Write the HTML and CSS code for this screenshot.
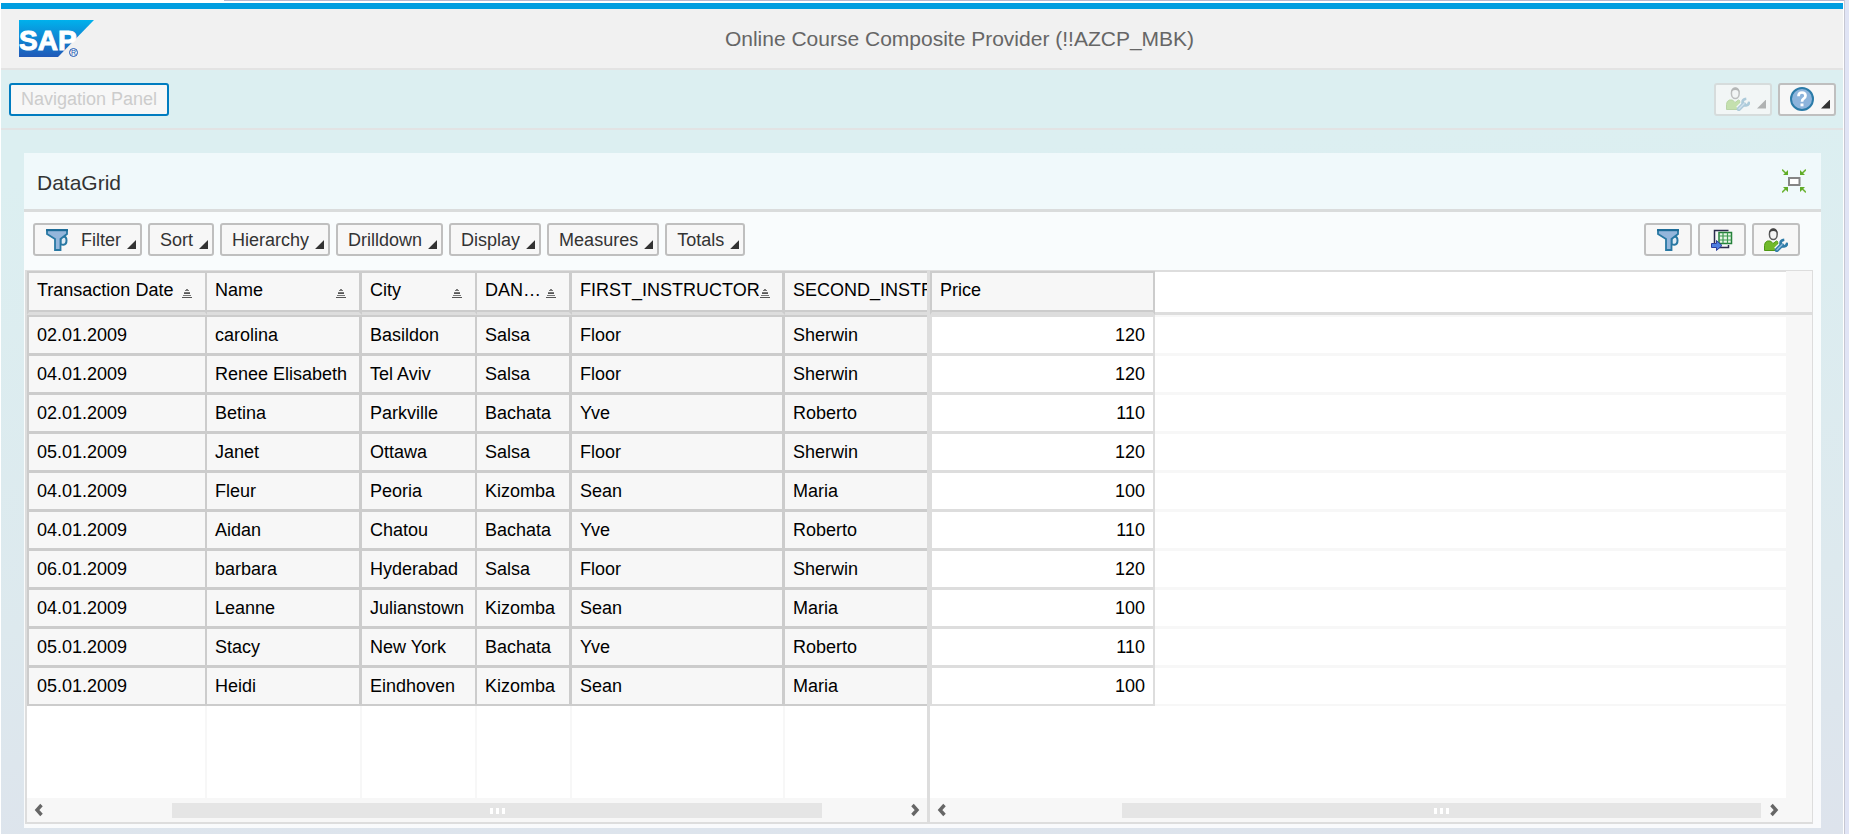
FILE: index.html
```html
<!DOCTYPE html>
<html lang="en">
<head>
<meta charset="utf-8">
<title>Online Course Composite Provider</title>
<link rel="stylesheet" href="styles.css">
</head>
<body>
<svg class="defs" aria-hidden="true">
  <defs>
    <linearGradient id="sapBlue" x1="0" y1="0" x2="0" y2="1">
      <stop offset="0" stop-color="#00b1ec"/><stop offset="1" stop-color="#2059b8"/>
    </linearGradient>
    <symbol id="funnel" viewBox="0 0 24 24">
      <path d="M15.500 16v-4q0-3.500 3-3.500t3 4-3 4.200q-2 0-3-.7" fill="#dfeaf4" stroke="#2878a3" stroke-width="2"/>
      <path d="M2 2h20v4l-6.500 5v11h-5.500V11L2 6z" fill="#94b6db" stroke="#2878a3" stroke-width="1.800"/>
      <path d="M1 2.200h22" stroke="#1c6b96" stroke-width="2"/>
    </symbol>
    <symbol id="person" viewBox="0 0 24 24">
      <path d="M.5 22.500v-5q0-3.500 3-4.500h3l2.500 2.500 3.500-2.500 1.500 1v8.500z" fill="#71b92a" stroke="#4e9713"/>
      <ellipse cx="9.300" cy="6.300" rx="3.900" ry="5.300" fill="#f4f4f4" stroke="#5c5c5c" stroke-width="1.500"/>
      <path d="M5 6q0-5.500 4.300-5.500T13.600 6q-1-3-4.300-3T5 6z" fill="#444"/>
      <path d="M12.500 22l6-6" stroke="#f7f7f7" stroke-width="6.500"/>
      <path d="M12.800 22l5-5" stroke="#2f7ca8" stroke-width="4.200" stroke-linecap="round"/>
      <path d="M20.500 11.500q-3.500.5-4.500 3.500" fill="none" stroke="#f7f7f7" stroke-width="5"/>
      <path d="M20.300 11.800q-4 .5-3.800 3.700 1 3 3.500 3 3-.5 3.300-3.800" fill="none" stroke="#2f7ca8" stroke-width="2.600"/>
      <path d="M13 21.800l5-5" stroke="#8fb8dc" stroke-width="1.500" stroke-linecap="round"/>
    </symbol>
    <symbol id="sortAsc" viewBox="0 0 10 10">
      <path d="M4 0h2v1h1v1H3V1h1zM2 4h6v1H2zM2 3h6v1H2zM1 6h8v1H1zM0 8h10v1H0z" fill="#777"/>
      <path d="M2 4h6v1H2zM0 8h10v1H0z" fill="#555"/>
    </symbol>
    <symbol id="chevLeft" viewBox="0 0 10 14">
      <path d="M7.500 2L3 7l4.500 5" fill="none" stroke="#666" stroke-width="3.400"/>
    </symbol>
    <symbol id="chevRight" viewBox="0 0 10 14">
      <path d="M2.500 2L7 7l-4.500 5" fill="none" stroke="#666" stroke-width="3.400"/>
    </symbol>
  </defs>
</svg>

<div class="app">
  <header class="shell">
    <svg class="logo" viewBox="0 0 75 38" role="img" aria-label="SAP">
      <path d="M0 0h75L39 37H0z" fill="url(#sapBlue)"/>
      <text class="logo-text" x="0" y="30">SAP</text>
      <circle cx="54.500" cy="32.500" r="4" fill="none" stroke="#2059b8"/>
      <text class="logo-mark" x="52" y="35">R</text>
    </svg>
    <h1 class="title">Online Course Composite Provider (!!AZCP_MBK)</h1>
  </header>

  <div class="topbar">
    <button class="btn nav-btn" type="button" disabled>Navigation Panel</button>
    <div class="topbar-actions">
      <button class="btn icon-menu faded" type="button" disabled aria-label="Personalize"><svg class="icon"><use href="#person"/></svg><span class="corner"></span></button>
      <button class="btn icon-menu" type="button" aria-label="Help">
        <svg class="icon" viewBox="0 0 24 24"><circle cx="12" cy="12" r="11" fill="#8db4dc" stroke="#2b7ba8" stroke-width="2"/><path d="M8.500 9.200q0-3.700 3.500-3.700t3.500 3.200q0 2-2 3-1.500.8-1.500 3" fill="none" stroke="#fff" stroke-width="2.700"/><path d="M10.500 16.500h3v2.800h-3z" fill="#fff"/></svg><span class="corner"></span></button>
    </div>
  </div>

  <main class="panel">
    <div class="panel-head">
      <h2 class="panel-title">DataGrid</h2>
      <button class="plain" type="button" aria-label="Restore">
        <svg class="icon" viewBox="0 0 24 24"><rect x="7" y="9" width="10.500" height="7" fill="#fff" stroke="#858585" stroke-width="2"/><path d="M0 .7l5 4.600M24 .7l-5 4.600M0 23.300l5-4.600M24 23.300l-5-4.600" stroke="#72b83b" stroke-width="1.700"/><path d="M6 1v5H1zM18 1v5h5zM6 23v-5H1zM18 23v-5h5z" fill="#60ac28"/></svg>
      </button>
    </div>

    <div class="toolbar">
      <button class="btn menu" type="button"><svg class="icon filter-icon"><use href="#funnel"/></svg>Filter<span class="corner"></span></button>
      <button class="btn menu" type="button">Sort<span class="corner"></span></button>
      <button class="btn menu" type="button">Hierarchy<span class="corner"></span></button>
      <button class="btn menu" type="button">Drilldown<span class="corner"></span></button>
      <button class="btn menu" type="button">Display<span class="corner"></span></button>
      <button class="btn menu" type="button">Measures<span class="corner"></span></button>
      <button class="btn menu" type="button">Totals<span class="corner"></span></button>
      <div class="toolbar-end">
        <button class="btn tool" type="button" aria-label="Filter settings"><svg class="icon"><use href="#funnel"/></svg></button>
        <button class="btn tool" type="button" aria-label="Export">
          <svg class="icon" viewBox="0 0 24 24"><path d="M4.500 15V2.500h14M9 19.500h9.500V17" fill="none" stroke="#2b2b4c" stroke-width="1.500"/><rect x="9" y="4.500" width="12.500" height="11" fill="#e9f7e9" stroke="#24803a" stroke-width="1.500"/><path d="M9 8h12.500M9 12h12.500M13 4.500v11M17.500 4.500v11" stroke="#3c9a50" stroke-width="1.200"/><path d="M1.500 15.500h5v-3l5.500 5-5.500 5v-3h-5z" fill="#4d7ee0" stroke="#2b3c9c"/></svg>
        </button>
        <button class="btn tool" type="button" aria-label="Personalize grid"><svg class="icon"><use href="#person"/></svg></button>
      </div>
    </div>

    <div class="grid">
      <section class="pane pane-dims">
        <table class="tbl dims">
          <colgroup><col class="c-date"><col class="c-name"><col class="c-city"><col class="c-dance"><col class="c-first"><col class="c-second"></colgroup>
          <thead>
            <tr>
              <th scope="col"><div class="th">Transaction Date<svg class="sort"><use href="#sortAsc"/></svg></div></th>
              <th scope="col"><div class="th">Name<svg class="sort"><use href="#sortAsc"/></svg></div></th>
              <th scope="col"><div class="th">City<svg class="sort"><use href="#sortAsc"/></svg></div></th>
              <th scope="col"><div class="th">DAN…<svg class="sort"><use href="#sortAsc"/></svg></div></th>
              <th scope="col"><div class="th">FIRST_INSTRUCTOR<svg class="sort"><use href="#sortAsc"/></svg></div></th>
              <th scope="col"><div class="th th-cut">SECOND_INSTRUCTOR</div></th>
            </tr>
          </thead>
          <tbody>
            <tr><td>02.01.2009</td><td>carolina</td><td>Basildon</td><td>Salsa</td><td>Floor</td><td>Sherwin</td></tr>
            <tr><td>04.01.2009</td><td>Renee Elisabeth</td><td>Tel Aviv</td><td>Salsa</td><td>Floor</td><td>Sherwin</td></tr>
            <tr><td>02.01.2009</td><td>Betina</td><td>Parkville</td><td>Bachata</td><td>Yve</td><td>Roberto</td></tr>
            <tr><td>05.01.2009</td><td>Janet</td><td>Ottawa</td><td>Salsa</td><td>Floor</td><td>Sherwin</td></tr>
            <tr><td>04.01.2009</td><td>Fleur</td><td>Peoria</td><td>Kizomba</td><td>Sean</td><td>Maria</td></tr>
            <tr><td>04.01.2009</td><td>Aidan</td><td>Chatou</td><td>Bachata</td><td>Yve</td><td>Roberto</td></tr>
            <tr><td>06.01.2009</td><td>barbara</td><td>Hyderabad</td><td>Salsa</td><td>Floor</td><td>Sherwin</td></tr>
            <tr><td>04.01.2009</td><td>Leanne</td><td>Julianstown</td><td>Kizomba</td><td>Sean</td><td>Maria</td></tr>
            <tr><td>05.01.2009</td><td>Stacy</td><td>New York</td><td>Bachata</td><td>Yve</td><td>Roberto</td></tr>
            <tr><td>05.01.2009</td><td>Heidi</td><td>Eindhoven</td><td>Kizomba</td><td>Sean</td><td>Maria</td></tr>
          </tbody>
        </table>
        <div class="empty empty-dims"><span></span><span></span><span></span><span></span><span></span></div>
        <div class="hscroll">
          <button class="plain arrow" type="button" aria-label="Scroll left"><svg class="chev"><use href="#chevLeft"/></svg></button>
          <div class="track"><div class="thumb" style="margin-left:14.2%;width:76.3%"><i></i><i></i><i></i></div></div>
          <button class="plain arrow" type="button" aria-label="Scroll right"><svg class="chev"><use href="#chevRight"/></svg></button>
        </div>
      </section>

      <section class="pane pane-values">
        <table class="tbl values">
          <colgroup><col class="c-price"><col></colgroup>
          <thead><tr><th scope="col"><div class="th">Price</div></th><td class="rest"></td></tr></thead>
          <tbody>
            <tr><td>120</td><td class="rest"></td></tr>
            <tr><td>120</td><td class="rest"></td></tr>
            <tr><td>110</td><td class="rest"></td></tr>
            <tr><td>120</td><td class="rest"></td></tr>
            <tr><td>100</td><td class="rest"></td></tr>
            <tr><td>110</td><td class="rest"></td></tr>
            <tr><td>120</td><td class="rest"></td></tr>
            <tr><td>100</td><td class="rest"></td></tr>
            <tr><td>110</td><td class="rest"></td></tr>
            <tr><td>100</td><td class="rest"></td></tr>
          </tbody>
        </table>
        <div class="empty"></div>
        <div class="hscroll">
          <button class="plain arrow" type="button" aria-label="Scroll left"><svg class="chev"><use href="#chevLeft"/></svg></button>
          <div class="track"><div class="thumb" style="margin-left:20.8%;width:79.1%"><i></i><i></i><i></i></div></div>
          <button class="plain arrow" type="button" aria-label="Scroll right"><svg class="chev"><use href="#chevRight"/></svg></button>
        </div>
      </section>
      <div class="vscroll"><div class="vscroll-head"></div></div>
    </div>
  </main>
</div>
</body>
</html>
```
FILE: styles.css
```css
* { box-sizing: border-box; }

body {
  margin: 0;
  padding: 0 0 0 1px;
  background: linear-gradient(to right, #fff 224px, #b6b7d1 224px) 0 0 / 100% 1px no-repeat #fff;
  color: #000;
  font-family: "Liberation Sans", Arial, sans-serif;
  font-size: 18px;
}

h1, h2 { margin: 0; font-weight: normal; font-size: 21px; line-height: 24px; }

button { font: inherit; color: inherit; }

.defs { position: absolute; width: 0; height: 0; }

.app {
  display: flex;
  flex-direction: column;
  min-height: 100vh;
  padding-top: 3px;
  padding-right: 2px;
  border-right: 4px solid #e0e4f5;
  box-shadow: inset -1px 0 #c6c7d2;
  background: linear-gradient(178deg, #dceff1 0%, #dceff1 20%, #dde9ee 70%, #dde3ec 100%) content-box;
}

.shell {
  display: flex;
  align-items: center;
  height: 67px;
  padding: 0 18px;
  border-top: 6px solid #009de0;
  border-bottom: 2px solid #e3e3e3;
  background: #f1f1f1;
}

.logo { flex: none; width: 75px; height: 38px; }
.logo-text { font-size: 28px; font-weight: bold; fill: #fff; stroke: #fff; stroke-width: 1; }
.logo-mark { font-size: 7px; fill: #2059b8; }

.title { flex: 1; text-align: center; color: #666; }

.topbar {
  display: flex;
  align-items: center;
  justify-content: space-between;
  height: 60px;
  padding: 0 7px 0 8px;
  border-bottom: 2px solid #e2e3e4;
}

.topbar-actions { display: flex; gap: 6px; }

.btn {
  display: inline-flex;
  align-items: center;
  height: 33px;
  padding: 0 4px 0 10px;
  border: 2px solid #bfbfbf;
  border-radius: 3px;
  background: #f7f7f7;
  color: #333;
  line-height: 24px;
}

.nav-btn { padding: 0 10px; border-color: #007cc0; color: #ccc; }

.icon { flex: none; display: block; width: 24px; height: 24px; }
.filter-icon { margin-right: 12px; }
.icon-menu { padding: 0 4px 0 10px; }
.icon-menu .icon { margin-right: 1px; }
.faded { border-color: #d6dcdc; background: #f2f6f6; }
.faded .icon, .faded .corner { opacity: 0.35; }

.corner {
  align-self: flex-end;
  width: 9px;
  height: 9px;
  margin: 0 0 5px 6px;
  background: #333;
  clip-path: polygon(100% 0, 100% 100%, 0 100%);
}

.plain { display: flex; padding: 0; border: 0; background: none; }

.panel {
  display: flex;
  flex: 1;
  flex-direction: column;
  margin: 23px 22px 6px 23px;
  background: rgba(255, 255, 255, 0.82);
}

.panel-head {
  display: flex;
  align-items: center;
  justify-content: space-between;
  height: 59px;
  padding: 0 15px 0 13px;
  border-bottom: 3px solid #dadcdc;
  background: #f0f9fb;
}

.panel-title { color: #333; padding-top: 4px; }

.toolbar { display: flex; gap: 6px; padding: 11px 21px 14px 9px; }
.toolbar-end { display: flex; gap: 6px; margin-left: auto; }
.tool { width: 48px; justify-content: center; padding: 0; }

.grid {
  display: flex;
  flex: 1;
  margin: 0 8px 4px 1px;
  border: solid #ddd;
  border-width: 1px 1px 2px 2px;
  background: #fff;
}

.pane { display: flex; flex-direction: column; min-width: 0; }
.pane-dims { flex: none; width: 903px; border-right: 3px solid #ddd; overflow: hidden; }
.pane-values { flex: 1; }

.tbl { width: 100%; table-layout: fixed; border-collapse: separate; border-spacing: 0; }
.c-date { width: 180px; }
.c-name { width: 155px; }
.c-city { width: 115px; }
.c-dance { width: 95px; }
.c-first { width: 213px; }
.c-second { width: 142px; }
.c-price { width: 225px; }

.tbl th {
  padding: 0;
  border: solid #ccc;
  border-width: 2px 2px 0 0;
  border-bottom: 3px solid #ddd;
  box-shadow: inset 0 -2px #ccc;
  background: #f7f7f7;
  font-weight: normal;
  text-align: left;
  overflow: hidden;
}

.th {
  display: flex;
  align-items: center;
  height: 39px;
  padding: 0 13px 4px 8px;
  line-height: 35px;
  white-space: nowrap;
}

.th-cut { padding-right: 0; overflow: hidden; }

.sort { flex: none; width: 10px; height: 10px; margin: 7px 0 0 auto; }

.tbl tbody td {
  padding: 0 8px;
  border: 0 solid #ccc;
  border-width: 0 2px 3px 0;
  background: #f7f7f7;
  line-height: 36px;
  white-space: nowrap;
}

.tbl tbody tr:first-child td { border-top-width: 2px; }
.tbl tbody tr:last-child td { border-bottom-width: 2px; }
.tbl th:first-child, .tbl tbody td:first-child { border-left-width: 2px; }
.dims :is(th, td):nth-child(2), .dims :is(th, td):nth-child(4), .dims :is(th, td):nth-child(5) { border-right-width: 3px !important; }
.dims th:last-child, .dims tbody td:last-child { border-right-width: 0; }

.values tbody td { border-color: #ddd; background: #fff; text-align: right; }
.values thead .rest { border-top: 1px solid #ddd; border-bottom: 3px solid #ddd; }
.values tbody .rest { border-color: #f7f7f7; border-right-width: 0; }

.empty { flex: 1; min-height: 40px; }
.empty-dims { display: grid; grid-template-columns: 180px 155px 115px 95px 213px 1fr; }
.empty-dims span { border-right: 2px solid #f7f7f7; }

.hscroll { display: flex; height: 24px; background: #f7f7f7; }
.arrow { flex: none; width: 24px; align-items: center; justify-content: center; }
.chev { width: 10px; height: 14px; }
.track { flex: 1; padding: 5px 0 4px; }
.thumb { display: flex; align-items: center; justify-content: center; gap: 3px; height: 15px; background: #e5e5e5; }
.thumb i { width: 3px; height: 6px; background: #fff; }

.vscroll { flex: none; width: 26px; background: #f7f7f7; }
.vscroll-head { height: 44px; border-bottom: 3px solid #ddd; }
```
